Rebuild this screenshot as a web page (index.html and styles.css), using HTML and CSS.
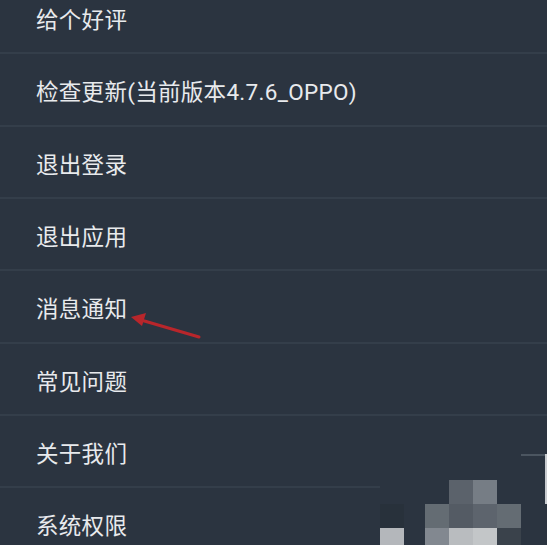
FILE: index.html
```html
<!DOCTYPE html>
<html lang="zh-CN">
<head>
<meta charset="utf-8">
<title>设置</title>
<link rel="stylesheet" href="styles.css">
</head>
<body>
<div class="screen">
  <ul class="menu">
    <li class="item">给个好评</li>
    <li class="item">检查更新(当前版本4.7.6_OPPO)</li>
    <li class="item">退出登录</li>
    <li class="item">退出应用</li>
    <li class="item">消息通知</li>
    <li class="item">常见问题</li>
    <li class="item">关于我们</li>
    <li class="item">系统权限</li>
  </ul>

  <svg class="arrow" width="80" height="30" viewBox="0 0 80 30">
    <line x1="10" y1="7" x2="68" y2="24" stroke="#b8262b" stroke-width="3" stroke-linecap="round"/>
    <polygon points="0,4 15,0 11,13" fill="#b8262b"/>
  </svg>

  <div class="patch">
    <div class="patch-line"></div>
    <div class="patch-edge"></div>
    <div class="mosaic">
      <i></i><i></i><i></i><i class="c1"></i><i class="c2"></i><i></i>
      <i class="c3"></i><i></i><i class="c4"></i><i class="c5"></i><i class="c6"></i><i class="c4"></i>
      <i class="c7"></i><i></i><i class="c8"></i><i class="c9"></i><i class="c10"></i><i class="c11"></i>
    </div>
  </div>
</div>
</body>
</html>
```

FILE: styles.css
```css
html, body {
  margin: 0;
  padding: 0;
  background: #2b3440;
}

.screen {
  position: relative;
  width: 547px;
  height: 545px;
  overflow: hidden;
  background: #2b3440;
}

.menu {
  list-style: none;
  margin: -18px 0 0 0;
  padding: 0;
}

.item {
  box-sizing: border-box;
  height: 72.33px;
  display: flex;
  align-items: center;
  padding: 2px 0 0 36px;
  border-bottom: 2px solid #343e4a;
  color: #e8eaed;
  font-family: Roboto, "Noto Sans CJK SC", sans-serif;
  font-size: 22.5px;
  letter-spacing: 0.3px;
}

.arrow {
  position: absolute;
  left: 131px;
  top: 313px;
}

.patch {
  position: absolute;
  left: 380px;
  top: 454px;
  width: 167px;
  height: 91px;
  background: #2b3440;
}

.patch-line {
  position: absolute;
  left: 141px;
  top: 0;
  width: 26px;
  height: 2px;
  background: #4b5560;
}

.patch-edge {
  position: absolute;
  right: 0;
  top: 0;
  width: 2px;
  height: 50px;
  background: #c9ccd0;
}

.mosaic {
  position: absolute;
  left: 0;
  top: 26px;
  display: grid;
  grid-template-columns: 24px 21px 24px 24px 24px 24px;
  grid-template-rows: 24px 24px 17px;
}

.mosaic i { display: block; }
.mosaic .c1 { background: #5b626b; }
.mosaic .c2 { background: #767d85; }
.mosaic .c3 { background: #28313b; }
.mosaic .c4 { background: #646c73; }
.mosaic .c5 { background: #545b64; }
.mosaic .c6 { background: #5d646d; }
.mosaic .c7 { background: #b4b7bb; }
.mosaic .c8 { background: #828890; }
.mosaic .c9 { background: #b9bcbf; }
.mosaic .c10 { background: #c3c6c8; }
.mosaic .c11 { background: #3a424b; }
```
